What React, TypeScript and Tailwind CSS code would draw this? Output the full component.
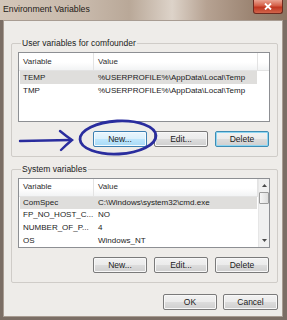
type Row = { name: string; value: string; selected?: boolean }

const userVars: Row[] = [
  { name: 'TEMP', value: '%USERPROFILE%\\AppData\\Local\\Temp', selected: true },
  { name: 'TMP', value: '%USERPROFILE%\\AppData\\Local\\Temp' },
]

const systemVars: Row[] = [
  { name: 'ComSpec', value: 'C:\\Windows\\system32\\cmd.exe', selected: true },
  { name: 'FP_NO_HOST_C...', value: 'NO' },
  { name: 'NUMBER_OF_P...', value: '4' },
  { name: 'OS', value: 'Windows_NT' },
]

function Btn({ label, kind = 'normal', wide = false }: { label: string; kind?: 'normal' | 'hover' | 'default'; wide?: boolean }) {
  const base = 'h-[16px] rounded-[2px] border flex items-center justify-center text-[8.5px] leading-none text-[#1b1b1b]'
  const look =
    kind === 'hover'
      ? 'border-[#3c7fb1] bg-[linear-gradient(#eaf6fd,#d9f0fc_50%,#bee6fd_50%,#a7d9f5)] shadow-[inset_0_0_0_1px_#f4fbff]'
      : kind === 'default'
        ? 'border-[#3d8db5] bg-[linear-gradient(#f2f2f2,#ebebeb_50%,#dddddd_50%,#cfcfcf)] shadow-[inset_0_0_0_1px_#8fd6f2]'
        : 'border-[#7a7a7a] bg-[linear-gradient(#f2f2f2,#ebebeb_50%,#dddddd_50%,#cfcfcf)] shadow-[inset_0_0_0_1px_#f8f8f8]'
  return <div className={`${base} ${look} ${wide ? 'w-[55px]' : 'w-[54px]'}`}>{label}</div>
}

function Arrow({ up }: { up?: boolean }) {
  return (
    <svg width="5" height="3" viewBox="0 0 5 3">
      <polygon points={up ? '0,3 5,3 2.5,0' : '0,0 5,0 2.5,3'} fill="#4a4a4a" />
    </svg>
  )
}

function VarList({ rows, scroll }: { rows: Row[]; scroll?: boolean }) {
  return (
    <div className="h-[70px] w-[252px] border border-[#8d8f93] bg-white flex overflow-hidden">
      <div className="w-[239px] flex flex-col">
        <div className="h-[18px] flex border-b border-[#e3e3e3] bg-[linear-gradient(#ffffff,#ffffff_55%,#f2f3f4)] text-[8px] text-[#2e2e2e]">
          <div className="w-[75px] pl-[4px] border-r border-[#e3e3e3] flex items-center">Variable</div>
          <div className="w-[164px] pl-[4px] border-r border-[#e3e3e3] flex items-center">Value</div>
        </div>
        {rows.map(r => (
          <div key={r.name} className={`h-[13px] mx-[1px] flex items-center text-[8px] whitespace-nowrap ${r.selected ? 'bg-[#dfdedc]' : ''}`}>
            <div className="w-[74px] pl-[3px]">{r.name}</div>
            <div className="pl-[4px]">{r.value}</div>
          </div>
        ))}
      </div>
      {scroll ? (
        <div className="w-[11px] flex flex-col bg-[#f0f0f0] border-l border-[#e6e6e6]">
          <div className="h-[13px] flex items-center justify-center"><Arrow up /></div>
          <div className="h-[12px] rounded-[1px] border border-[#9c9c9c] bg-[linear-gradient(90deg,#f6f6f6,#dedede)]" />
          <div className="flex-1" />
          <div className="h-[13px] flex items-center justify-center"><Arrow /></div>
        </div>
      ) : (
        <div className="w-[11px] flex flex-col">
          <div className="h-[18px] border-b border-[#e3e3e3] bg-[linear-gradient(#ffffff,#ffffff_55%,#f2f3f4)]" />
        </div>
      )}
    </div>
  )
}

function Group({ title, rows, scroll, hoverNew, className }: { title: string; rows: Row[]; scroll?: boolean; hoverNew?: boolean; className: string }) {
  return (
    <div className={`ml-[7px] mr-[4px] border border-[#cfccc8] rounded-[2px] flex flex-col pl-[6px] pr-[7px] pb-[9px] ${className}`}>
      <span className="-mt-[6px] ml-[3px] self-start px-[1px] bg-[#eeece9] text-[8.5px] leading-[10px] text-[#1b1b1b]">{title}</span>
      <div className="mt-[4px]">
        <VarList rows={rows} scroll={scroll} />
      </div>
      <div className="mt-[9px] mr-[1px] flex justify-end gap-[7px]">
        <Btn label="New..." kind={hoverNew ? 'hover' : 'normal'} />
        <Btn label="Edit..." />
        <Btn label="Delete" kind={hoverNew ? 'default' : 'normal'} />
      </div>
    </div>
  )
}

export default function App() {
  return (
    <div className="relative w-[287px] h-[320px] overflow-hidden flex flex-col bg-[#7b6e65] font-['Liberation_Sans',Arial,sans-serif] text-[#1b1b1b]">
      <div className="h-[20px] flex items-start bg-[linear-gradient(90deg,#d3c6b9,#c7b8aa_30%,#b9a898_45%,#ddd3c9_60%,#b6a292_72%,#9b8472_88%,#8c7563)]">
        <span className="pl-[3px] pt-[4px] text-[8.7px] leading-[11px] text-[#1e1a17]">Environment Variables</span>
        <div className="ml-auto mr-[4px] w-[30px] h-[14px] rounded-b-[3px] border border-t-0 border-[#6e2a1f] bg-[linear-gradient(#e9a391,#d45d45_45%,#bf351f_55%,#d2654b)] flex items-center justify-center">
          <svg width="8" height="7" viewBox="0 0 8 7">
            <path d="M1 0.5 L7 6.5 M7 0.5 L1 6.5" stroke="#fff" strokeWidth="1.8" />
          </svg>
        </div>
      </div>

      <div className="flex-1 pl-[3px] pr-[4px] pb-[3px] flex">
        <div className="flex-1 bg-[#eeece9] border border-[#a89c92] flex flex-col">
          <Group title="User variables for comfounder" rows={userVars} hoverNew className="mt-[22px]" />
          <Group title="System variables" rows={systemVars} scroll className="mt-[12px]" />
          <div className="mt-[11px] pr-[4px] flex justify-end gap-[6px]">
            <Btn label="OK" />
            <Btn label="Cancel" wide />
          </div>
        </div>
      </div>

      <svg className="absolute inset-0 pointer-events-none" width="287" height="320" viewBox="0 0 287 320">
        <ellipse cx="118" cy="137.5" rx="38" ry="16.5" transform="rotate(-3 118 137.5)" fill="none" stroke="#2a2d9e" strokeWidth="2.8" />
        <path d="M20 141 L71 140" fill="none" stroke="#2a2d9e" strokeWidth="2.4" strokeLinecap="round" />
        <path d="M60 131 Q66 136 72 140 Q66 145 61 150" fill="none" stroke="#2a2d9e" strokeWidth="2.4" strokeLinecap="round" />
      </svg>
    </div>
  )
}
